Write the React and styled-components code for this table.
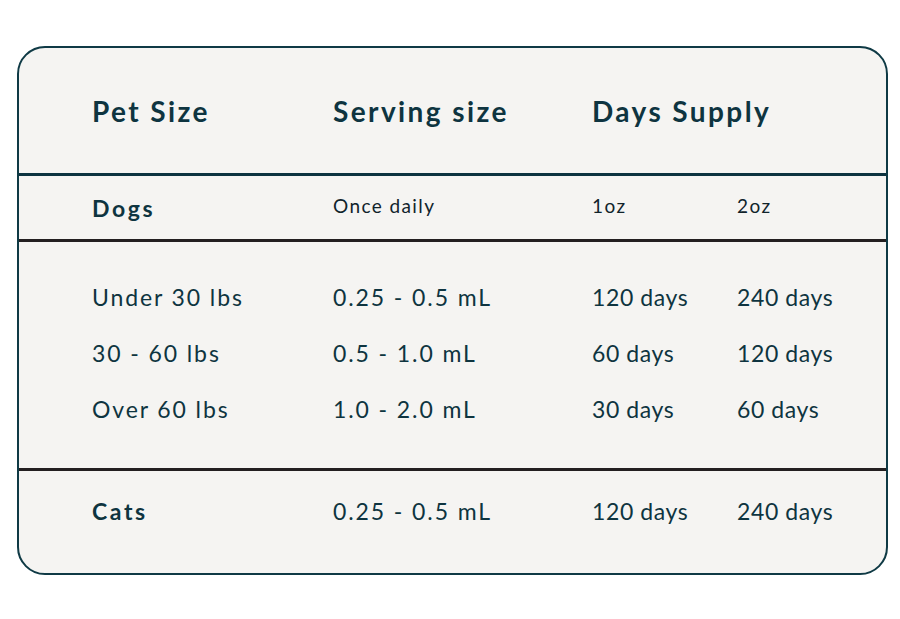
import React from "react";
import styled, { createGlobalStyle } from "styled-components";

const GlobalStyle = createGlobalStyle`
  body {
    margin: 0;
    background: #ffffff;
    font-family: Lato, "Open Sans", sans-serif;
  }
`;

const Page = styled.div`
  width: 900px;
  height: 619px;
  padding: 46px 12px 0 17px;
  box-sizing: border-box;
`;

const Card = styled.div`
  width: 871px;
  height: 529px;
  box-sizing: border-box;
  border: 2px solid #0f3a45;
  border-radius: 28px;
  background: #f5f4f2;
  color: #0e3440;
  overflow: hidden;
  display: flex;
  flex-direction: column;
`;

const Row = styled.div`
  display: grid;
  grid-template-columns: 241px 259px 145px 1fr;
  align-items: center;
  padding-left: 73px;
  height: ${(p) => p.h}px;
`;

const Body = styled.div`
  display: flex;
  flex-direction: column;
  padding: 27px 0 31px;
`;

const Divider = styled.div`
  height: 3px;
  background: ${(p) => (p.dark ? "#231f20" : "#0d3340")};
`;

const Head = styled.div`
  font-size: 28px;
  font-weight: 700;
  letter-spacing: 2.4px;
  grid-column: ${(p) => p.span || "auto"};
`;

const Label = styled.div`
  font-size: 23px;
  font-weight: 700;
  letter-spacing: 2.6px;
`;

const Small = styled.div`
  font-size: 19px;
  letter-spacing: 1.4px;
  color: #10232b;
  padding-bottom: 4px;
`;

const Cell = styled.div`
  font-size: 23px;
  letter-spacing: ${(p) => (p.wide ? 1.9 : 0.6)}px;
`;

const rows = [
  ["Under 30 lbs", "0.25 - 0.5 mL", "120 days", "240 days"],
  ["30 - 60 lbs", "0.5 - 1.0 mL", "60 days", "120 days"],
  ["Over 60 lbs", "1.0 - 2.0 mL", "30 days", "60 days"]
];

const App = () => (
  <Page>
    <GlobalStyle />
    <Card>
      <Row h={125}>
        <Head>Pet Size</Head>
        <Head>Serving size</Head>
        <Head span="3 / span 2">Days Supply</Head>
      </Row>
      <Divider />
      <Row h={63}>
        <Label>Dogs</Label>
        <Small>Once daily</Small>
        <Small>1oz</Small>
        <Small>2oz</Small>
      </Row>
      <Divider dark />
      <Body>
        {rows.map((r) => (
          <Row h={56} key={r[0]}>
            {r.map((c, i) => (
              <Cell key={c} wide={i < 2}>
                {c}
              </Cell>
            ))}
          </Row>
        ))}
      </Body>
      <Divider dark />
      <Row h={80}>
        <Label>Cats</Label>
        <Cell wide>0.25 - 0.5 mL</Cell>
        <Cell>120 days</Cell>
        <Cell>240 days</Cell>
      </Row>
    </Card>
  </Page>
);

export default App;
